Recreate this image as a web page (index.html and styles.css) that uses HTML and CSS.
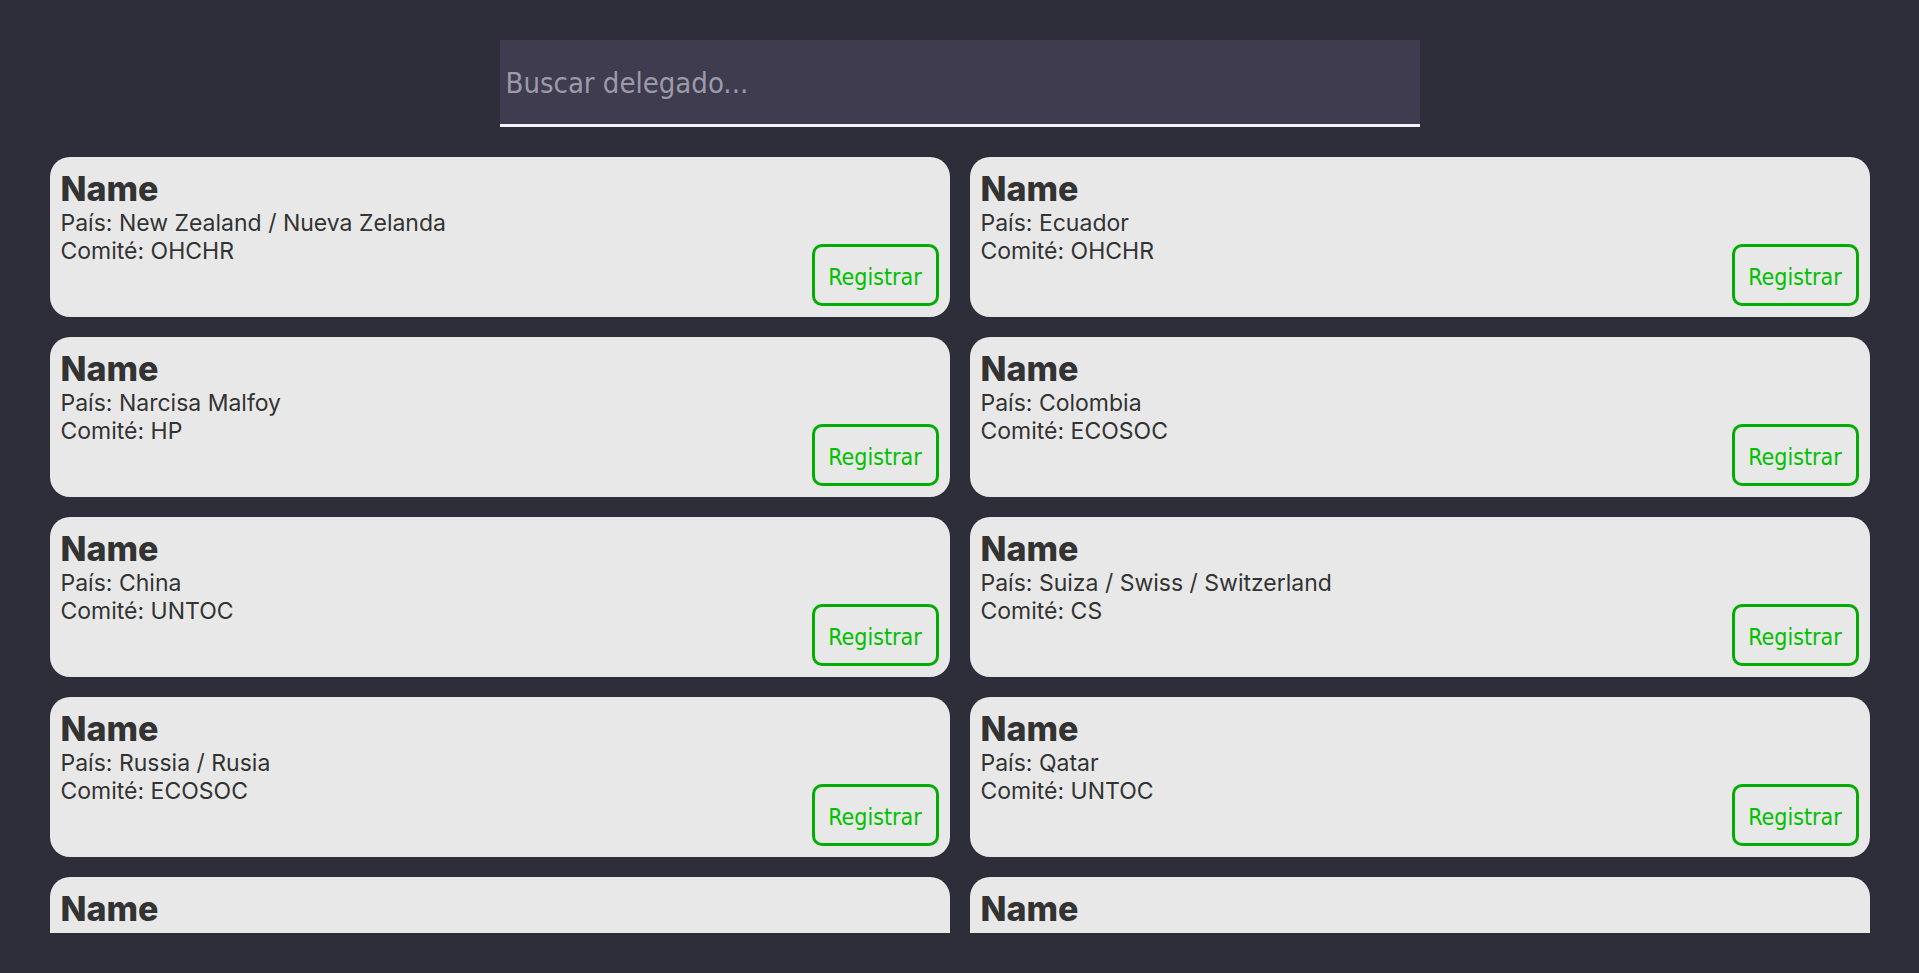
FILE: index.html
```html
<!DOCTYPE html>
<html lang="es">
<head>
<meta charset="utf-8">
<title>Delegados</title>
<link rel="stylesheet" href="styles.css">
</head>
<body>
<header class="search-bar">
  <input class="search-input" type="text" placeholder="Buscar delegado...">
</header>
<main class="list">
  <div class="grid">
    <div class="card"><div class="card-info"><h2 class="card-name">Name</h2><p class="card-line">País: New Zealand / Nueva Zelanda</p><p class="card-line">Comité: OHCHR</p></div><button class="btn">Registrar</button></div>
    <div class="card"><div class="card-info"><h2 class="card-name">Name</h2><p class="card-line">País: Ecuador</p><p class="card-line">Comité: OHCHR</p></div><button class="btn">Registrar</button></div>
    <div class="card"><div class="card-info"><h2 class="card-name">Name</h2><p class="card-line">País: Narcisa Malfoy</p><p class="card-line">Comité: HP</p></div><button class="btn">Registrar</button></div>
    <div class="card"><div class="card-info"><h2 class="card-name">Name</h2><p class="card-line">País: Colombia</p><p class="card-line">Comité: ECOSOC</p></div><button class="btn">Registrar</button></div>
    <div class="card"><div class="card-info"><h2 class="card-name">Name</h2><p class="card-line">País: China</p><p class="card-line">Comité: UNTOC</p></div><button class="btn">Registrar</button></div>
    <div class="card"><div class="card-info"><h2 class="card-name">Name</h2><p class="card-line">País: Suiza / Swiss / Switzerland</p><p class="card-line">Comité: CS</p></div><button class="btn">Registrar</button></div>
    <div class="card"><div class="card-info"><h2 class="card-name">Name</h2><p class="card-line">País: Russia / Rusia</p><p class="card-line">Comité: ECOSOC</p></div><button class="btn">Registrar</button></div>
    <div class="card"><div class="card-info"><h2 class="card-name">Name</h2><p class="card-line">País: Qatar</p><p class="card-line">Comité: UNTOC</p></div><button class="btn">Registrar</button></div>
    <div class="card card-partial"><div class="card-info"><h2 class="card-name">Name</h2></div></div>
    <div class="card card-partial"><div class="card-info"><h2 class="card-name">Name</h2></div></div>
  </div>
</main>
</body>
</html>
```
FILE: styles.css
```css
html, body {
  margin: 0;
  padding: 0;
  height: 100%;
  overflow: hidden;
}
body {
  background: #2e2d3a;
  font-family: Inter, Roboto, "Noto Sans", sans-serif;
}
.search-bar {
  display: flex;
  justify-content: center;
  padding-top: 40px;
}
.search-input {
  box-sizing: border-box;
  width: 920px;
  height: 87px;
  margin: 0;
  padding: 2px 6px 0;
  border: none;
  border-bottom: 3px solid #f4f4f4;
  background: #403c50;
  color: #e0e0e0;
  font-family: "DejaVu Sans Condensed", "DejaVu Sans", sans-serif;
  font-stretch: condensed;
  font-size: 29px;
  outline: none;
}
.search-input::placeholder {
  color: #9c9aa6;
}
.list {
  width: 1820px;
  height: 776px;
  margin: 30px auto 0;
  overflow: hidden;
}
.grid {
  display: grid;
  grid-template-columns: 1fr 1fr;
  gap: 20px;
}
.card {
  box-sizing: border-box;
  height: 160px;
  background: #e8e8e8;
  border-radius: 20px;
  padding: 12px 11px 11px 11px;
  display: grid;
  grid-template-columns: 1fr auto;
  color: #333333;
}
.card-partial {
  height: 56px;
  border-radius: 20px 20px 0 0;
}
.card-info {
  min-width: 0;
}
.card-name {
  margin: 0;
  font-size: 34px;
  font-weight: 800;
  line-height: 40px;
}
.card-line {
  margin: 0;
  font-size: 23px;
  line-height: 28px;
}
.btn {
  align-self: end;
  box-sizing: border-box;
  width: 127px;
  height: 62px;
  margin: 0;
  padding: 4px 0 0;
  background: transparent;
  border: 3px solid #00ad00;
  border-radius: 10px;
  color: #00c000;
  font-family: "DejaVu Sans Condensed", "DejaVu Sans", sans-serif;
  font-stretch: condensed;
  font-size: 23px;
  cursor: pointer;
}
```
